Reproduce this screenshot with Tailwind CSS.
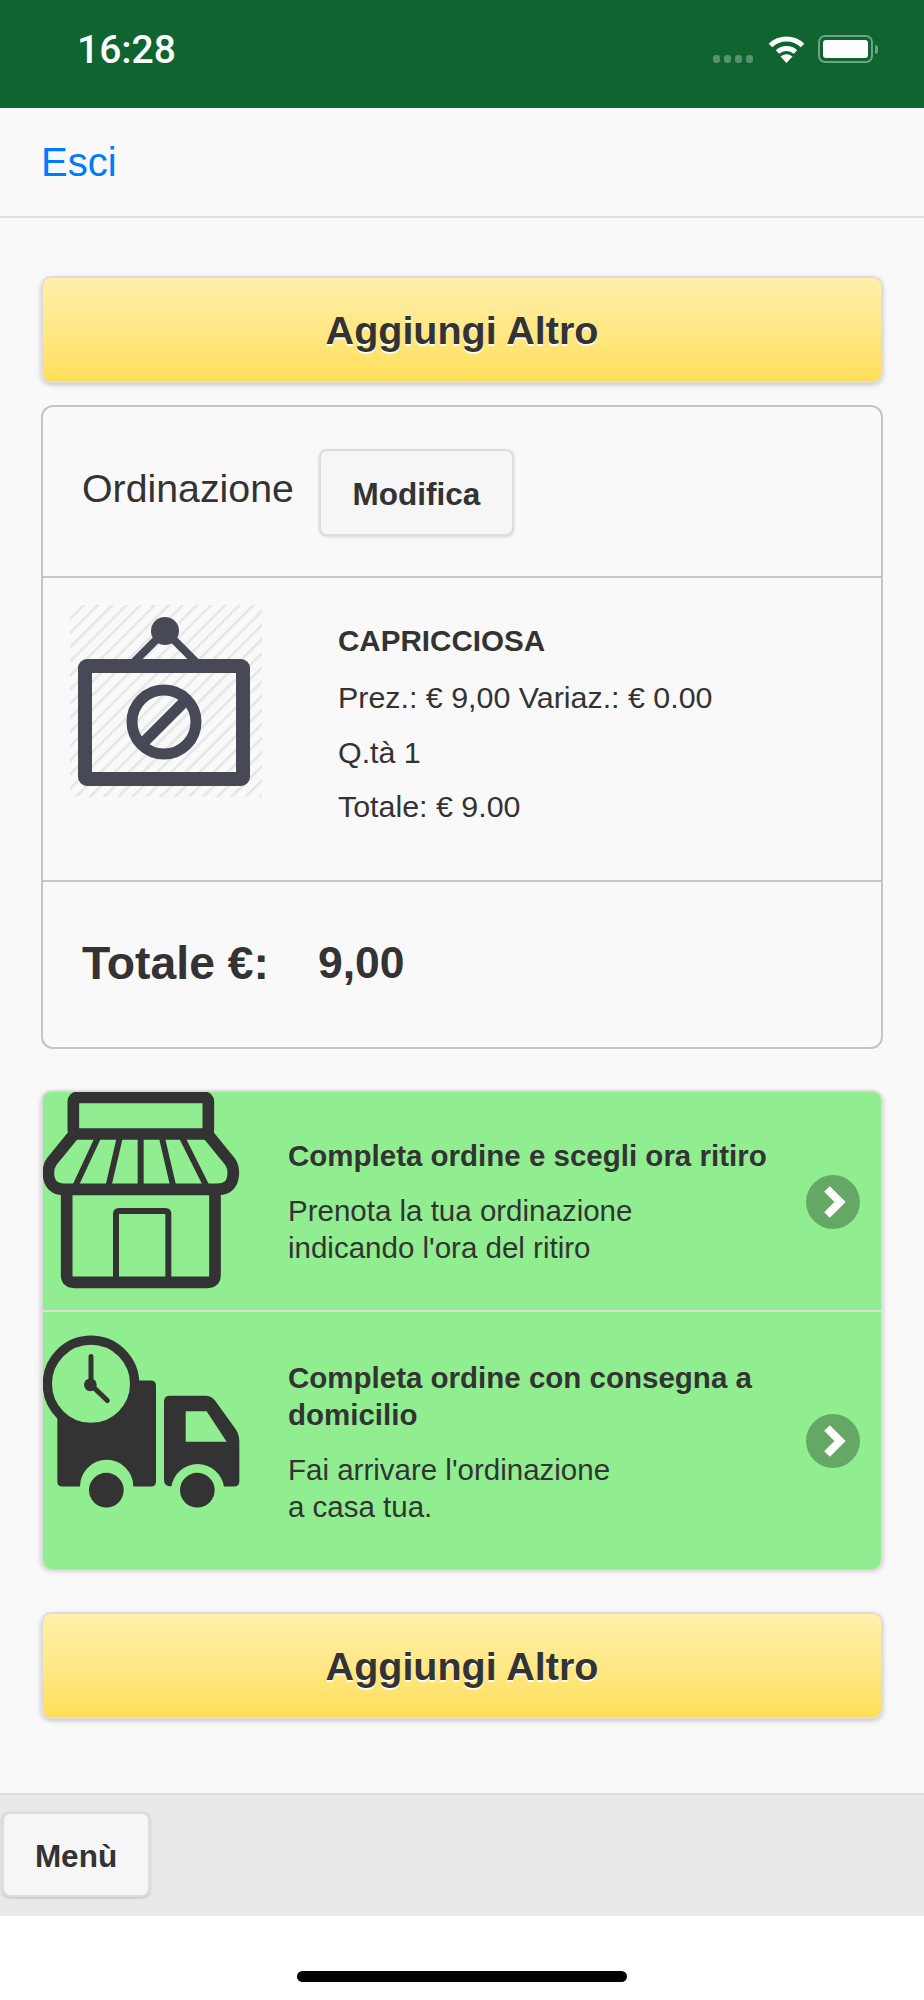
<!DOCTYPE html>
<html lang="it">
<head>
  <meta charset="UTF-8" />
  <meta name="viewport" content="width=device-width,initial-scale=1.0" />
  <title>Ordinazione</title>
  <script src="https://cdn.jsdelivr.net/npm/@tailwindcss/browser@4"></script>
</head>
<body class="w-[924px] h-[2000px] bg-white font-['Liberation_Sans',Arial,sans-serif] text-[#333] overflow-hidden">

<!-- Status bar -->
<div class="h-[108px] bg-[#0f6430] relative">
  <span class="absolute left-[77px] top-[28px] font-['Roboto',sans-serif] font-medium text-[39px] leading-[44px] text-white">16:28</span>
  <div class="absolute left-[713px] top-[55px] flex gap-[4px]">
    <span class="w-[7px] h-[8px] rounded-[3px] bg-white/30"></span>
    <span class="w-[7px] h-[8px] rounded-[3px] bg-white/30"></span>
    <span class="w-[7px] h-[8px] rounded-[3px] bg-white/30"></span>
    <span class="w-[7px] h-[8px] rounded-[3px] bg-white/30"></span>
  </div>
  <svg class="absolute left-[768px] top-[35px]" width="37" height="28" viewBox="0 0 37 28" fill="none">
    <path d="M2.5 10.5A23 23 0 0 1 34.5 10.5" stroke="#fff" stroke-width="5"/>
    <path d="M9.5 17A13.5 13.5 0 0 1 27.5 17" stroke="#fff" stroke-width="5"/>
    <path d="M18.5 28L12.5 21.5Q18.5 17 24.5 21.5Z" fill="#fff"/>
  </svg>
  <div class="absolute left-[818px] top-[35px] w-[55px] h-[28px] rounded-[7px] border-2 border-white/40 p-[3px]">
    <div class="w-full h-full rounded-[3px] bg-white"></div>
  </div>
  <div class="absolute left-[875px] top-[45px] w-[3px] h-[9px] rounded-r-[3px] bg-white/40"></div>
</div>

<!-- Header -->
<div class="h-[110px] bg-[#f9f9f9] border-b-2 border-[#ddd] pl-[41px] pt-[31px]">
  <a class="text-[40px] leading-[46px] text-[#007aff]">Esci</a>
</div>

<!-- Content -->
<div class="h-[1575px] bg-[#f9f9f9] px-[41px] pt-[58px]">
  <div class="h-[107px] pt-[3px] rounded-[10px] border-2 border-[#ddd] bg-gradient-to-b from-[#fff0ab] to-[#ffdf58] shadow-[0_2px_5px_rgba(0,0,0,0.2)] flex items-center justify-center font-bold text-[39.5px] [text-shadow:0_2px_0_#fff]">Aggiungi Altro</div>

  <!-- Order card -->
  <div class="mt-[22px] h-[644px] rounded-[12px] border-2 border-[#c4c4c4] flex flex-col">
    <div class="h-[171px] border-b-2 border-[#c4c4c4] flex items-start pl-[39px]">
      <span class="mt-[58px] text-[39.3px] leading-[46px]">Ordinazione</span>
      <div class="ml-[25px] mt-[42px] pt-[4px] w-[195px] h-[87px] rounded-[8px] border-2 border-[#ddd] bg-[#f6f6f6] shadow-[0_1px_3px_rgba(0,0,0,0.15)] flex items-center justify-center font-bold text-[31.5px]">Modifica</div>
    </div>
    <div class="h-[304px] border-b-2 border-[#c4c4c4] flex pl-[26px] pt-[26px]">
      <svg class="shrink-0" width="194" height="194" viewBox="0 0 194 194">
        <defs>
          <pattern id="hatch" width="10" height="10" patternUnits="userSpaceOnUse" patternTransform="rotate(45)">
            <rect width="2.5" height="10" fill="#e6e6e6"/>
          </pattern>
        </defs>
        <rect x="1" y="1" width="192" height="192" fill="url(#hatch)"/>
        <path d="M65 58L96 27L127 58" fill="none" stroke="#474957" stroke-width="8"/>
        <circle cx="96" cy="27" r="14" fill="#474957"/>
        <rect x="16" y="62" width="158" height="113" rx="2" fill="none" stroke="#474957" stroke-width="14"/>
        <circle cx="95" cy="118" r="32" fill="none" stroke="#474957" stroke-width="11"/>
        <path d="M73 140L117 96" stroke="#474957" stroke-width="11"/>
      </svg>
      <div class="ml-[75px] text-[30.4px] leading-[54px]">
        <div class="font-bold text-[29.6px] mt-[10px] mb-[2px]">CAPRICCIOSA</div>
        <div>Prez.: € 9,00 Variaz.: € 0.00</div>
        <div class="mt-[1px]">Q.tà 1</div>
        <div>Totale: € 9.00</div>
      </div>
    </div>
    <div class="flex-1 flex items-start pl-[39px] pt-[55px] font-bold text-[46.3px] leading-[52px]">
      <span>Totale €:</span>
      <span class="ml-[49px] text-[44.5px]">9,00</span>
    </div>
  </div>

  <!-- Checkout options -->
  <div class="mt-[41px] h-[479px] rounded-[10px] bg-[#90ee90] border-2 border-[#ddd] border-b-0 shadow-[0_2px_5px_rgba(0,0,0,0.2)] flex flex-col overflow-hidden">
    <div class="h-[220px] border-b-2 border-[#ddd] flex">
      <svg class="shrink-0 ml-[-3px] mt-[-2px]" width="200" height="200" viewBox="30 30 600 600" fill="none" stroke="#333">
        <rect x="130" y="52" width="405" height="110" rx="12" stroke-width="35"/>
        <path d="M130 165L65 245Q55 258 55 280Q58 328 100 328H565Q608 328 610 280Q610 258 600 245L535 165" stroke-width="35"/>
        <path d="M205 170L135 320M270 170L235 320M332 170V320M395 170L430 320M455 170L530 320" stroke-width="18"/>
        <path d="M110 335V585Q110 607 132 607H533Q555 607 555 585V335" stroke-width="35"/>
        <path d="M258 600V402Q258 393 267 393H406Q415 393 415 402V600" stroke-width="18"/>
      </svg>
      <div class="ml-[48px] pt-[45px] w-[524px] shrink-0">
        <div class="font-bold text-[29.5px] leading-[37px]">Completa ordine e scegli ora ritiro</div>
        <div class="mt-[18px] text-[29.5px] leading-[37px]">Prenota la tua ordinazione<br>indicando l'ora del ritiro</div>
      </div>
      <svg class="shrink-0 ml-[-6px] mt-[83px]" width="54" height="54" viewBox="0 0 54 54">
        <circle cx="27" cy="27" r="27" fill="#65a866"/>
        <path d="M21 14L34 27L21 40" fill="none" stroke="#fff" stroke-width="8"/>
      </svg>
    </div>
    <div class="flex-1 flex">
      <svg class="shrink-0 ml-[-3px] mt-[21px]" width="200" height="177" viewBox="30 70 600 530">
        <path d="M82 300V515Q82 530 97 530H150A80 80 0 0 1 310 530H363Q378 530 378 515V228Q378 212 362 212H300L150 300Z" fill="#333"/>
        <circle cx="183" cy="222" r="131" fill="#90ee90" stroke="#333" stroke-width="28"/>
        <path d="M183 140V225L232 272" fill="none" stroke="#333" stroke-width="15" stroke-linecap="round"/>
        <circle cx="181" cy="225" r="19" fill="#333"/>
        <path d="M402 275Q402 258 420 258H525Q545 258 555 272L615 355Q628 372 628 395V515Q628 530 612 530H582A80 80 0 0 0 424 530Q402 530 402 510Z" fill="#333"/>
        <path d="M467 304H530L590 396H467Z" fill="#90ee90"/>
        <circle cx="229" cy="541" r="52" fill="#333"/>
        <circle cx="502" cy="541" r="52" fill="#333"/>
      </svg>
      <div class="ml-[48px] pt-[47px] w-[524px] shrink-0">
        <div class="font-bold text-[29.5px] leading-[37px]">Completa ordine con consegna a<br>domicilio</div>
        <div class="mt-[18px] text-[29.5px] leading-[37px]">Fai arrivare l'ordinazione<br>a casa tua.</div>
      </div>
      <svg class="shrink-0 ml-[-6px] mt-[102px]" width="54" height="54" viewBox="0 0 54 54">
        <circle cx="27" cy="27" r="27" fill="#65a866"/>
        <path d="M21 14L34 27L21 40" fill="none" stroke="#fff" stroke-width="8"/>
      </svg>
    </div>
  </div>

  <div class="mt-[43px] h-[107px] pt-[3px] rounded-[10px] border-2 border-[#ddd] bg-gradient-to-b from-[#fff0ab] to-[#ffdf58] shadow-[0_2px_5px_rgba(0,0,0,0.2)] flex items-center justify-center font-bold text-[39.5px] [text-shadow:0_2px_0_#fff]">Aggiungi Altro</div>
</div>

<!-- Footer -->
<div class="h-[123px] bg-[#e9e9e9] border-t-2 border-[#ddd] pl-[2px] pt-[17px]">
  <div class="w-[148px] h-[85px] pt-[4px] rounded-[8px] border-2 border-[#ddd] bg-[#f6f6f6] shadow-[0_1px_3px_rgba(0,0,0,0.2)] flex items-center justify-center font-bold text-[31.5px]">Menù</div>
</div>

<!-- Home indicator -->
<div class="h-[84px] bg-white flex justify-center pt-[55px]">
  <div class="w-[330px] h-[11px] rounded-full bg-black"></div>
</div>

</body>
</html>
